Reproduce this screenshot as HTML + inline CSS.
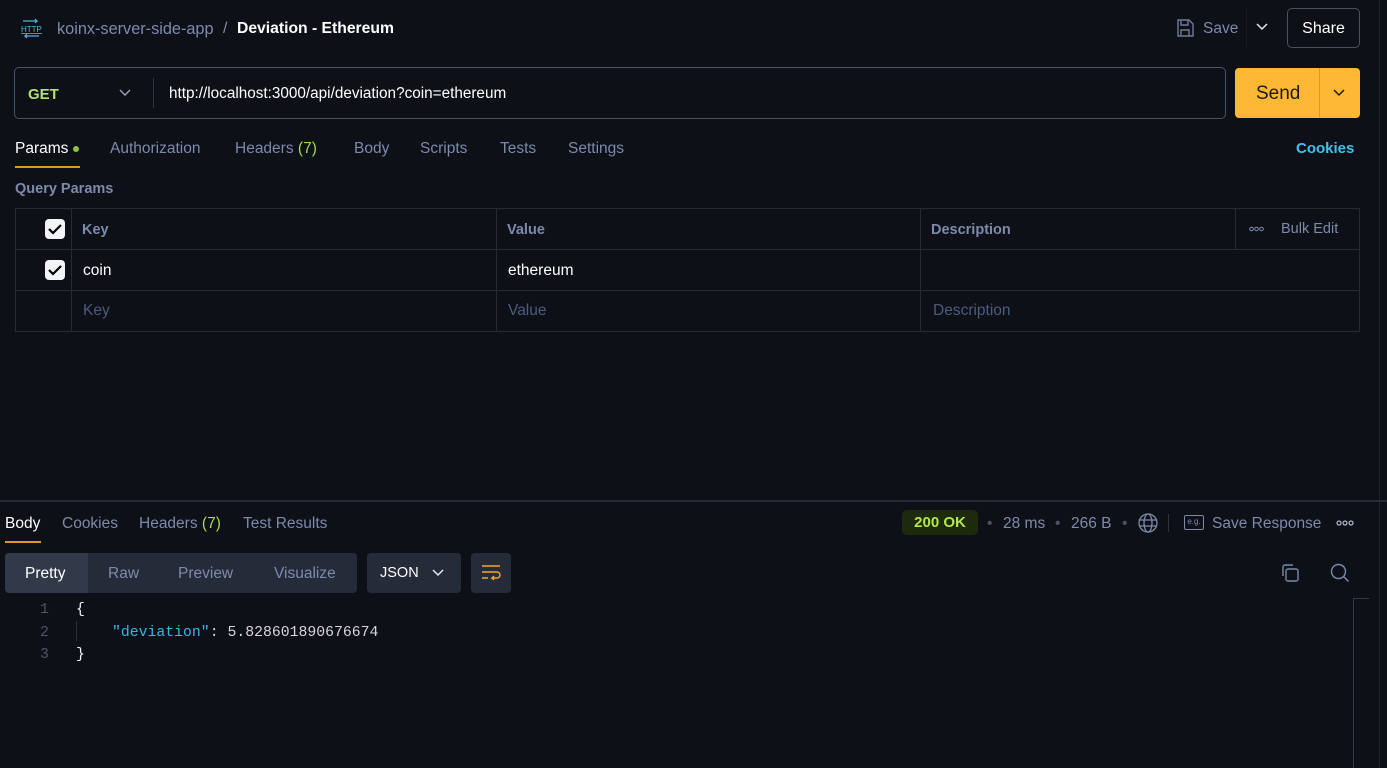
<!DOCTYPE html>
<html><head><style>
*{margin:0;padding:0;box-sizing:border-box}
body{width:1387px;height:768px;background:#0d1017;font-family:"Liberation Sans",sans-serif;color:#e6e8ee;position:relative;overflow:hidden;font-size:15.5px}
.a{position:absolute;white-space:nowrap}
.m{color:#7d8aab}
.cb{position:absolute;width:20px;height:20px;background:#f2f4f8;border-radius:4px}
.cb svg{position:absolute;left:3px;top:4px}
.vl{position:absolute;width:1px;background:#262b36}
.hl{position:absolute;height:1px;background:#262b36}
</style></head><body>
<div class="vl" style="left:1379px;top:0;height:500px;background:#1f232c"></div>
<svg class="a" style="left:19px;top:18px" width="24" height="22" viewBox="0 0 24 22"><path d="M4 3h14l-2-2M18 3l-2 2" stroke="#4fb8d8" fill="none" stroke-width="1.2"/><text x="2" y="14" font-size="8" fill="#4fb8d8" font-family="Liberation Sans" text-decoration="underline">HTTP</text><path d="M20 18H6l2-2M6 18l2 2" stroke="#4fb8d8" fill="none" stroke-width="1.2"/></svg>
<div class="a m" style="left:57px;top:20px;font-size:16.3px">koinx-server-side-app</div>
<div class="a m" style="left:223px;top:20px;font-size:16px">/</div>
<div class="a" style="left:237px;top:20px;font-size:15.7px;font-weight:bold;color:#fff">Deviation - Ethereum</div>
<svg class="a" style="left:1175px;top:18px" width="20" height="20" viewBox="0 0 20 20"><path d="M3 2h11l4 4v12H3z M6 2v5h7V2 M6 18v-6h8v6" stroke="#6e7b9a" fill="none" stroke-width="1.4"/></svg>
<div class="a m" style="left:1203px;top:20px;font-size:15.5px">Save</div>
<div class="vl" style="left:1246px;top:8px;height:40px;background:#161a22"></div>
<svg class="a" style="left:1256px;top:23px" width="12" height="8"><path d="M1 1l5 5 5-5" stroke="#e6e8ee" fill="none" stroke-width="1.5"/></svg>
<div class="a" style="left:1287px;top:8px;width:73px;height:40px;border:1px solid #4a505c;border-radius:5px;color:#fff;text-align:center;line-height:39px;font-size:16px">Share</div>
<div class="a" style="left:14px;top:67px;width:1212px;height:52px;border:1px solid #48526b;border-radius:5px"></div>
<div class="a" style="left:28px;top:86px;font-weight:bold;color:#b4e06b;font-size:15px">GET</div>
<svg class="a" style="left:119px;top:89px" width="12" height="8"><path d="M1 1l5 5 5-5" stroke="#9aa3b8" fill="none" stroke-width="1.4"/></svg>
<div class="vl" style="left:153px;top:78px;height:30px;background:#2e3442"></div>
<div class="a" style="left:169px;top:85px;font-size:15.3px;color:#fff">http://localhost:3000/api/deviation?coin=ethereum</div>
<div class="a" style="left:1235px;top:68px;width:125px;height:50px;background:#ffb833;border-radius:4px"></div>
<div class="a" style="left:1256px;top:83px;font-size:19px;color:#1a1a1a">Send</div>
<div class="vl" style="left:1319px;top:68px;height:50px;background:#d99a20"></div>
<svg class="a" style="left:1333px;top:89px" width="12" height="8"><path d="M1 1l5 5 5-5" stroke="#1a1a1a" fill="none" stroke-width="1.5"/></svg>
<div class="a" style="left:15px;top:140px;color:#fff">Params</div>
<div class="a" style="left:73px;top:146px;width:6px;height:6px;border-radius:3px;background:#8fc33a"></div>
<div class="a" style="left:15px;top:166px;width:65px;height:2px;background:#d99a20"></div>
<div class="a m" style="left:110px;top:140px">Authorization</div>
<div class="a m" style="left:235px;top:140px">Headers <span style="color:#a6d957">(7)</span></div>
<div class="a m" style="left:354px;top:140px">Body</div>
<div class="a m" style="left:420px;top:140px">Scripts</div>
<div class="a m" style="left:500px;top:140px">Tests</div>
<div class="a m" style="left:568px;top:140px">Settings</div>
<div class="a" style="left:1296px;top:140px;color:#3ec1f2;font-weight:bold;font-size:15px">Cookies</div>
<div class="a m" style="left:15px;top:181px;font-weight:bold;font-size:14.5px">Query Params</div>
<div class="a" style="left:15px;top:208px;width:1345px;height:124px;border:1px solid #262b36"></div>
<div class="hl" style="left:15px;top:249px;width:1345px"></div>
<div class="hl" style="left:15px;top:290px;width:1345px"></div>
<div class="vl" style="left:71px;top:208px;height:124px"></div>
<div class="vl" style="left:496px;top:208px;height:124px"></div>
<div class="vl" style="left:920px;top:208px;height:124px"></div>
<div class="vl" style="left:1235px;top:208px;height:41px"></div>
<div class="cb" style="left:45px;top:219px"><svg width="14" height="12"><path d="M1 6l4 4 8-8" stroke="#000" fill="none" stroke-width="2.2"/></svg></div>
<div class="cb" style="left:45px;top:260px"><svg width="14" height="12"><path d="M1 6l4 4 8-8" stroke="#000" fill="none" stroke-width="2.2"/></svg></div>
<div class="a m" style="left:82px;top:222px;font-weight:bold;font-size:14.5px">Key</div>
<div class="a m" style="left:507px;top:222px;font-weight:bold;font-size:14.5px">Value</div>
<div class="a m" style="left:931px;top:222px;font-weight:bold;font-size:14.5px">Description</div>
<svg class="a" style="left:1249px;top:226px" width="16" height="6"><g stroke="#7d8aab" fill="none" stroke-width="1"><circle cx="2.5" cy="3" r="1.8"/><circle cx="7.5" cy="3" r="1.8"/><circle cx="12.5" cy="3" r="1.8"/></g></svg>
<div class="a m" style="left:1281px;top:221px;font-size:14.5px">Bulk Edit</div>
<div class="a" style="left:83px;top:262px;color:#fff">coin</div>
<div class="a" style="left:508px;top:262px;color:#fff">ethereum</div>
<div class="a" style="left:83px;top:302px;color:#4d5b7f">Key</div>
<div class="a" style="left:508px;top:302px;color:#4d5b7f">Value</div>
<div class="a" style="left:933px;top:302px;color:#4d5b7f">Description</div>
<div class="hl" style="left:0;top:500px;width:1387px;height:2px;background:#262b36"></div>
<div class="a" style="left:5px;top:515px;color:#fff">Body</div>
<div class="a" style="left:5px;top:541px;width:36px;height:2px;background:#d99a20"></div>
<div class="a m" style="left:62px;top:515px">Cookies</div>
<div class="a m" style="left:139px;top:515px">Headers <span style="color:#a6d957">(7)</span></div>
<div class="a m" style="left:243px;top:515px">Test Results</div>
<div class="a" style="left:902px;top:510px;width:76px;height:25px;background:#1e2a0c;border-radius:5px;color:#b4e84a;text-align:center;line-height:26px;font-size:15px;font-weight:bold">200 OK</div>
<div class="a m" style="left:987px;top:515px;color:#4a5168">•</div>
<div class="a m" style="left:1003px;top:515px">28 ms</div>
<div class="a m" style="left:1055px;top:515px;color:#4a5168">•</div>
<div class="a m" style="left:1071px;top:515px">266 B</div>
<div class="a m" style="left:1122px;top:515px;color:#4a5168">•</div>
<svg class="a" style="left:1138px;top:513px" width="20" height="20" viewBox="0 0 20 20"><circle cx="10" cy="10" r="9" stroke="#7d8aab" fill="none" stroke-width="1.3"/><ellipse cx="10" cy="10" rx="4" ry="9" stroke="#7d8aab" fill="none" stroke-width="1.3"/><path d="M1.5 7h17M1.5 13h17" stroke="#7d8aab" stroke-width="1.3"/></svg>
<div class="vl" style="left:1168px;top:514px;height:18px;background:#2e3442"></div>
<div class="a" style="left:1184px;top:515px;width:20px;height:15px;border:1.3px solid #7d8aab;border-radius:2px;font-size:8px;color:#7d8aab;text-align:center;line-height:12px">e.g.</div>
<div class="a m" style="left:1212px;top:515px">Save Response</div>
<svg class="a" style="left:1336px;top:520px" width="18" height="6"><g stroke="#b0b8cc" fill="none" stroke-width="1.2"><circle cx="3" cy="3" r="2"/><circle cx="9" cy="3" r="2"/><circle cx="15" cy="3" r="2"/></g></svg>
<div class="a" style="left:5px;top:553px;width:352px;height:40px;background:#252b38;border-radius:4px"></div>
<div class="a" style="left:5px;top:553px;width:83px;height:40px;background:#323a4a;border-radius:4px 0 0 4px"></div>
<div class="a" style="left:25px;top:565px;color:#fff">Pretty</div>
<div class="a m" style="left:108px;top:565px">Raw</div>
<div class="a m" style="left:178px;top:565px">Preview</div>
<div class="a m" style="left:274px;top:565px">Visualize</div>
<div class="a" style="left:367px;top:553px;width:94px;height:40px;background:#252b38;border-radius:4px"></div>
<div class="a" style="left:380px;top:565px;color:#fff;font-size:14.5px">JSON</div>
<svg class="a" style="left:432px;top:569px" width="12" height="8"><path d="M1 1l5 5 5-5" stroke="#e6e8ee" fill="none" stroke-width="1.5"/></svg>
<div class="a" style="left:471px;top:553px;width:40px;height:40px;background:#252b38;border-radius:4px"></div>
<svg class="a" style="left:481px;top:564px" width="20" height="18" viewBox="0 0 20 18"><path d="M1 2h18M1 8h15a3 3 0 010 6h-5l2-2M11 14l2 2M1 14h6" stroke="#f0a830" fill="none" stroke-width="1.4"/></svg>
<svg class="a" style="left:1280px;top:563px" width="20" height="20" viewBox="0 0 20 20"><rect x="6" y="6" width="12" height="12" rx="2" stroke="#7d8aab" fill="none" stroke-width="1.4"/><path d="M3 13V4a2 2 0 012-2h8" stroke="#7d8aab" fill="none" stroke-width="1.4"/></svg>
<svg class="a" style="left:1330px;top:563px" width="20" height="20" viewBox="0 0 20 20"><circle cx="8.5" cy="8.5" r="7" stroke="#7d8aab" fill="none" stroke-width="1.4"/><path d="M13.5 13.5l5 5" stroke="#7d8aab" stroke-width="1.4"/></svg>
<div class="vl" style="left:1353px;top:598px;height:170px;background:#333a48"></div>
<div class="hl" style="left:1353px;top:598px;width:16px;background:#333a48"></div>
<div class="vl" style="left:1379px;top:502px;height:266px;background:#1f232c"></div>
<div style="font-family:'Liberation Mono',monospace;font-size:14.8px">
<div class="a" style="left:40px;top:602px;color:#4e5566">1</div>
<div class="a" style="left:40px;top:625px;color:#4e5566">2</div>
<div class="a" style="left:40px;top:647px;color:#4e5566">3</div>
<div class="a" style="left:76px;top:602px;color:#f2f2f2">{</div>
<div class="vl" style="left:76px;top:621px;height:20px;background:#2a2f3a"></div>
<div class="a" style="left:112px;top:625px;color:#d4d6dc"><span style="color:#39b5e8">"deviation"</span>: 5.828601890676674</div>
<div class="a" style="left:76px;top:647px;color:#f2f2f2">}</div>
</div>
</body></html>
